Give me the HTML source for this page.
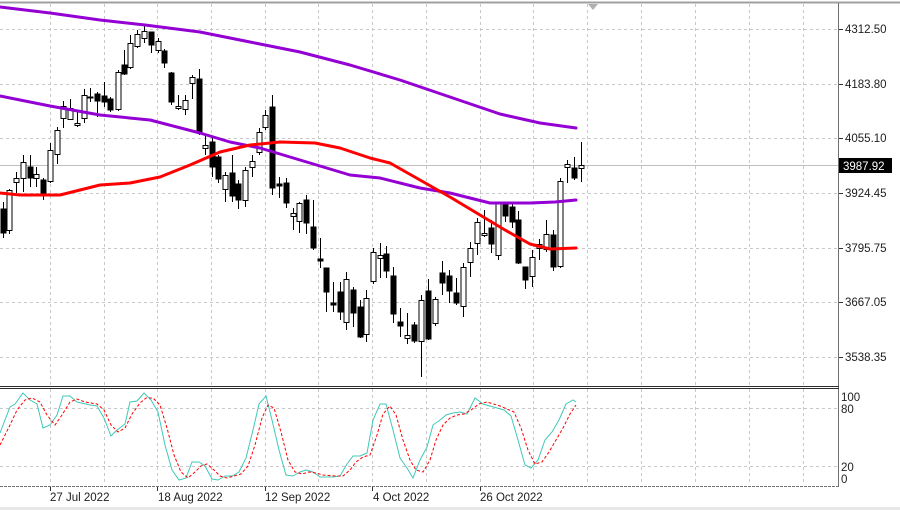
<!DOCTYPE html>
<html><head><meta charset="utf-8"><style>
html,body{margin:0;padding:0;background:#fff;width:900px;height:511px;overflow:hidden}
svg{display:block;font-family:"Liberation Sans",sans-serif}
</style></head><body>
<svg width="900" height="511" viewBox="0 0 900 511" xmlns="http://www.w3.org/2000/svg">
<rect width="900" height="511" fill="#fff"/>
<line x1="0" y1="2.5" x2="900" y2="2.5" stroke="#a0a0a0" stroke-width="2"/>
<g stroke="#c8c8c8" stroke-width="1" stroke-dasharray="3,3">
<path d="M50.5 4V386M104.5 4V386M157.5 4V386M211.5 4V386M265.5 4V386M318.5 4V386M372.5 4V386M426.5 4V386M480.5 4V386M533.5 4V386M587.5 4V386M641.5 4V386M695.5 4V386M749.5 4V386M803.5 4V386"/>
<path d="M0 29.5H838M0 84.5H838M0 138.5H838M0 193.5H838M0 248.5H838M0 302.5H838M0 357.5H838"/>
<path d="M50.5 389V485M104.5 389V485M157.5 389V485M211.5 389V485M265.5 389V485M318.5 389V485M372.5 389V485M426.5 389V485M480.5 389V485M533.5 389V485M587.5 389V485M641.5 389V485M695.5 389V485M749.5 389V485M803.5 389V485"/>
<path d="M0 408.5H838M0 466.5H838"/>
</g>
<line x1="0" y1="165.5" x2="838" y2="165.5" stroke="#c0c0c0"/>
<polygon points="588,4 598,4 593,10" fill="#b0b0b0"/>
<g stroke="#000" stroke-width="1">
<path d="M3.5 202V238M9.5 189V234M16.5 172V193M23.5 155V192M30.5 155V187M36.5 167V187M43.5 178V200M50.5 143V183M57.5 127V164M63.5 101V128M70.5 99V120M77.5 110V127M84.5 89V123M90.5 88V102M97.5 92V117M104.5 82V107M110.5 97V112M118.5 70V111M124.5 50V75M130.5 35V69M137.5 30V48M144.5 25V43M151.5 32V53M158.5 38V53M164.5 49V68M171.5 72V105M178.5 95V110M185.5 95V115M192.5 75V99M199.5 69V135M205.5 135V155M212.5 137V177M218.5 155V183M225.5 172V202M232.5 155V202M238.5 180V209M245.5 167V207M252.5 155V177M259.5 128V155M265.5 110V130M272.5 95V195M279.5 177V198M286.5 178V208M293.5 208V230M299.5 202V233M306.5 195V234M313.5 200V250M320.5 238V268M326.5 268V312M333.5 282V312M340.5 282V320M346.5 272V330M353.5 287V327M360.5 300V338M366.5 290V342M373.5 248V284M380.5 243V278M386.5 246V278M393.5 267V323M400.5 308V337M407.5 313V344M414.5 322V343M421.5 295V377M428.5 279V340M435.5 297V326M442.5 261V295M449.5 270V303M456.5 278V305M463.5 263V317M470.5 242V277M477.5 218V255M484.5 210V237M491.5 220V253M498.5 203V260M505.5 203V222M512.5 203V228M518.5 211V264M525.5 267V289M532.5 250V287M539.5 239V260M546.5 220V252M553.5 230V271M560.5 178V268M567.5 160V183M574.5 157V180M581.5 142V182"/>
</g>
<g stroke="#000" stroke-width="1">
<rect x="1" y="209" width="5" height="24" fill="#000"/>
<rect x="7" y="190.5" width="5" height="40" fill="#fff"/>
<rect x="14" y="178.5" width="5" height="4" fill="#fff"/>
<rect x="21" y="162.5" width="5" height="16" fill="#fff"/>
<rect x="28" y="167" width="5" height="11" fill="#000"/>
<rect x="34" y="174.5" width="5" height="4" fill="#fff"/>
<rect x="41" y="180" width="5" height="13" fill="#000"/>
<rect x="48" y="150.5" width="5" height="31" fill="#fff"/>
<rect x="55" y="130.5" width="5" height="24" fill="#fff"/>
<rect x="61" y="106.5" width="5" height="12" fill="#fff"/>
<rect x="68" y="108.5" width="5" height="11" fill="#fff"/>
<rect x="75" y="123.5" width="5" height="2" fill="#fff"/>
<rect x="82" y="95.5" width="5" height="23" fill="#fff"/>
<rect x="88" y="97" width="5" height="1" fill="#000"/>
<rect x="95" y="94" width="5" height="7" fill="#000"/>
<rect x="102" y="96" width="5" height="6" fill="#000"/>
<rect x="108" y="99" width="5" height="11" fill="#000"/>
<rect x="116" y="72.5" width="5" height="37" fill="#fff"/>
<rect x="122" y="65" width="5" height="9" fill="#000"/>
<rect x="128" y="43.5" width="5" height="24" fill="#fff"/>
<rect x="135" y="34.5" width="5" height="12" fill="#fff"/>
<rect x="142" y="31.5" width="5" height="7" fill="#fff"/>
<rect x="149" y="32" width="5" height="13" fill="#000"/>
<rect x="156" y="41.5" width="5" height="9" fill="#fff"/>
<rect x="162" y="51" width="5" height="12" fill="#000"/>
<rect x="169" y="73" width="5" height="29" fill="#000"/>
<rect x="176" y="106.5" width="5" height="2" fill="#fff"/>
<rect x="183" y="100.5" width="5" height="9" fill="#fff"/>
<rect x="190" y="77.5" width="5" height="6" fill="#fff"/>
<rect x="197" y="79" width="5" height="54" fill="#000"/>
<rect x="203" y="145.5" width="5" height="3" fill="#fff"/>
<rect x="210" y="142" width="5" height="25" fill="#000"/>
<rect x="216" y="157" width="5" height="22" fill="#000"/>
<rect x="223" y="175.5" width="5" height="14" fill="#fff"/>
<rect x="230" y="173" width="5" height="23" fill="#000"/>
<rect x="236" y="184" width="5" height="16" fill="#000"/>
<rect x="243" y="170.5" width="5" height="30" fill="#fff"/>
<rect x="250" y="161.5" width="5" height="6" fill="#fff"/>
<rect x="257" y="132.5" width="5" height="20" fill="#fff"/>
<rect x="263" y="115.5" width="5" height="12" fill="#fff"/>
<rect x="270" y="107" width="5" height="81" fill="#000"/>
<rect x="277" y="184" width="5" height="2" fill="#000"/>
<rect x="284" y="183" width="5" height="20" fill="#000"/>
<rect x="291" y="213.5" width="5" height="3" fill="#fff"/>
<rect x="297" y="203.5" width="5" height="18" fill="#fff"/>
<rect x="304" y="200" width="5" height="23" fill="#000"/>
<rect x="311" y="227" width="5" height="21" fill="#000"/>
<rect x="318" y="259" width="5" height="2" fill="#000"/>
<rect x="324" y="268" width="5" height="24" fill="#000"/>
<rect x="331" y="303" width="5" height="2" fill="#000"/>
<rect x="338" y="292" width="5" height="20" fill="#000"/>
<rect x="344" y="279.5" width="5" height="43" fill="#fff"/>
<rect x="351" y="290" width="5" height="23" fill="#000"/>
<rect x="358" y="307" width="5" height="30" fill="#000"/>
<rect x="364" y="298.5" width="5" height="36" fill="#fff"/>
<rect x="371" y="252.5" width="5" height="29" fill="#fff"/>
<rect x="378" y="255.5" width="5" height="3" fill="#fff"/>
<rect x="384" y="254" width="5" height="17" fill="#000"/>
<rect x="391" y="276" width="5" height="38" fill="#000"/>
<rect x="398" y="322" width="5" height="4" fill="#000"/>
<rect x="405" y="335.5" width="5" height="3" fill="#fff"/>
<rect x="412" y="325" width="5" height="16" fill="#000"/>
<rect x="419" y="300.5" width="5" height="41" fill="#fff"/>
<rect x="426" y="291" width="5" height="48" fill="#000"/>
<rect x="433" y="299.5" width="5" height="24" fill="#fff"/>
<rect x="440" y="273" width="5" height="10" fill="#000"/>
<rect x="447" y="276" width="5" height="15" fill="#000"/>
<rect x="454" y="293" width="5" height="10" fill="#000"/>
<rect x="461" y="267.5" width="5" height="39" fill="#fff"/>
<rect x="468" y="248.5" width="5" height="14" fill="#fff"/>
<rect x="475" y="222.5" width="5" height="21" fill="#fff"/>
<rect x="482" y="233.5" width="5" height="2" fill="#fff"/>
<rect x="489" y="228" width="5" height="16" fill="#000"/>
<rect x="496" y="203.5" width="5" height="52" fill="#fff"/>
<rect x="503" y="205" width="5" height="11" fill="#000"/>
<rect x="510" y="207" width="5" height="15" fill="#000"/>
<rect x="516" y="220" width="5" height="43" fill="#000"/>
<rect x="523" y="267" width="5" height="13" fill="#000"/>
<rect x="530" y="257.5" width="5" height="19" fill="#fff"/>
<rect x="537" y="244.5" width="5" height="4" fill="#fff"/>
<rect x="544" y="234.5" width="5" height="15" fill="#fff"/>
<rect x="551" y="235" width="5" height="32" fill="#000"/>
<rect x="558" y="181.5" width="5" height="85" fill="#fff"/>
<rect x="565" y="164.5" width="5" height="3" fill="#fff"/>
<rect x="572" y="168" width="5" height="10" fill="#000"/>
<rect x="579" y="165.5" width="5" height="3" fill="#fff"/>
</g>
<g fill="none" stroke-width="3" stroke-linejoin="round" stroke-linecap="round">
<polyline stroke="#9400d3" points="0,7 50,13 100,20 145,25 200,32 250,42 300,52 350,65 400,80 450,97 500,114 540,123 576,128"/>
<polyline stroke="#9400d3" points="0,96 50,106 100,115 150,120 200,133 230,142 260,148 300,160 350,175 380,178 420,188 450,193 490,203 530,203 555,202 576,200"/>
<polyline stroke="#ff0000" points="0,193 20,195 60,195 80,190 100,185 130,183 160,177 190,165 220,152 250,145 280,142 315,143 340,148 370,158 390,163 420,180 450,197 480,215 505,230 530,244 550,249 576,248"/>
</g>
<g fill="none" stroke-width="1">
<polyline stroke="#40c8b8" points="0,433 10,407 15,404 23,393 30,400 37,404 43,428 50,425 57,415 63,396 70,396 77,402 90,405 97,406 104,418 111,436 117,430 125,424 130,402 137,401 144,393 151,400 158,412 165,445 172,470 179,480 186,478 192,462 199,462 205,466 212,479 218,480 225,476 232,476 239,472 246,458 253,430 259,404 266,396 272,420 279,450 286,475 293,476 300,472 306,470 313,472 320,477 333,477 340,476 347,464 353,456 360,456 367,453 373,420 380,404 386,404 393,430 400,458 407,468 413,478 420,460 427,447 433,425 440,420 446,415 453,413 460,412 467,414 475,398 483,404 497,408 504,410 511,416 518,440 525,465 531,468 538,460 545,440 552,432 559,420 566,404 573,400 576,402"/>
<polyline stroke="#ff0000" stroke-dasharray="3,2" points="0,445 10,425 17,410 25,400 32,398 40,402 47,415 55,425 62,415 70,402 77,399 85,402 97,404 104,410 111,425 118,432 125,428 132,414 140,403 146,398 153,398 160,405 167,428 174,455 181,472 188,478 195,472 201,466 207,464 214,470 220,476 227,478 234,476 241,474 248,466 255,445 262,418 268,405 274,408 281,432 288,460 295,472 302,474 309,472 316,473 323,475 336,476 343,476 350,470 356,462 363,457 370,455 377,435 383,414 390,406 396,415 403,440 410,460 416,470 423,472 430,460 436,440 443,425 450,418 457,415 464,414 471,410 479,404 487,402 500,406 507,409 514,412 521,428 528,450 535,464 542,462 549,452 556,440 563,428 570,414 576,405"/>
</g>
<line x1="838.5" y1="3" x2="838.5" y2="487" stroke="#707070"/>
<line x1="0" y1="386.5" x2="839" y2="386.5" stroke="#303030"/>
<line x1="0" y1="388.5" x2="839" y2="388.5" stroke="#303030"/>
<line x1="0" y1="486.5" x2="839" y2="486.5" stroke="#707070" stroke-dasharray="3,1"/>
<g stroke="#303030"><path d="M839 29.5h4M839 84.5h4M839 138.5h4M839 193.5h4M839 248.5h4M839 302.5h4M839 357.5h4M50.5 487v4M157.5 487v4M265.5 487v4M372.5 487v4M480.5 487v4"/></g>
<g font-size="11.5" fill="#202020">
<text x="845" y="33">4312.50</text>
<text x="845" y="88">4183.80</text>
<text x="845" y="142">4055.10</text>
<text x="845" y="197">3924.45</text>
<text x="845" y="252">3795.75</text>
<text x="845" y="306">3667.05</text>
<text x="845" y="361">3538.35</text>
<text x="841" y="401">100</text>
<text x="841" y="413">80</text>
<text x="841" y="471">20</text>
<text x="841" y="483">0</text>
<text x="50" y="501">27 Jul 2022</text>
<text x="158" y="501">18 Aug 2022</text>
<text x="265" y="501">12 Sep 2022</text>
<text x="373" y="501">4 Oct 2022</text>
<text x="480" y="501">26 Oct 2022</text>
</g>
<rect x="839" y="158" width="53" height="15" fill="#000"/>
<text x="843" y="170" font-size="11.5" fill="#fff">3987.92</text>
<line x1="0" y1="508.5" x2="900" y2="508.5" stroke="#e8e8e8" stroke-width="3"/>
</svg>
</body></html>
